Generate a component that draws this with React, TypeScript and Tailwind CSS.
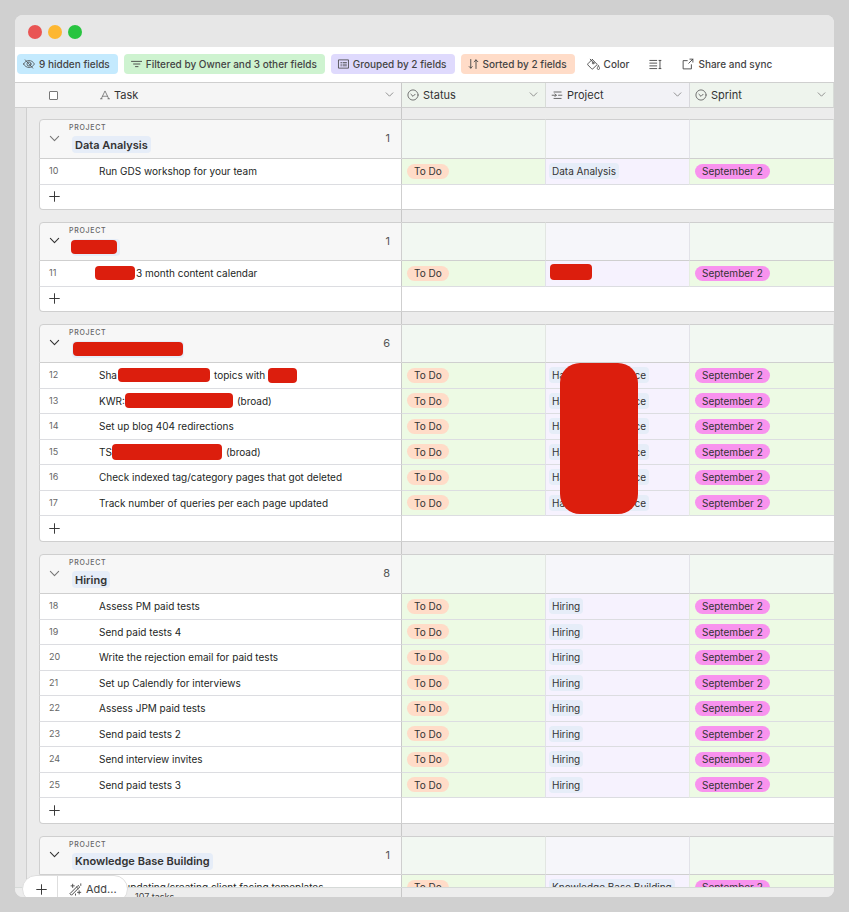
import { type ReactNode } from "react";
import clsx from "clsx";

type Task = { id: number; title: ReactNode; project: ReactNode };
type Group = { name: string; heading: ReactNode; count: number; open?: boolean; tasks: Task[] };

function Redacted({ className }: { className: string }) {
  return <span className={clsx("inline-block shrink-0 bg-[#dc1e0d]", className)} />;
}

function ProjectChip({ children }: { children: ReactNode }) {
  return <span className="flex h-4 w-fit items-center rounded-sm bg-[#e6edf8] px-[3px]">{children}</span>;
}

const simple = (first: number, titles: string[], project: string): Task[] =>
  titles.map((title, i) => ({ id: first + i, title, project: <ProjectChip>{project}</ProjectChip> }));

const partial = (
  <span className="flex h-4 w-[100px] items-center justify-between rounded-sm bg-[#e6edf8] px-[3px]">
    <span>Ha</span>
    <span>ce</span>
  </span>
);

const groups: Group[] = [
  {
    name: "Data Analysis",
    heading: "Data Analysis",
    count: 1,
    tasks: simple(10, ["Run GDS workshop for your team"], "Data Analysis"),
  },
  {
    name: "Redacted",
    heading: <Redacted className="-ml-1 h-[14px] w-[46px] rounded" />,
    count: 1,
    open: true,
    tasks: [
      {
        id: 11,
        title: (
          <>
            <Redacted className="-ml-1 h-[14px] w-10 rounded" />
            <span className="ml-px">3 month content calendar</span>
          </>
        ),
        project: <Redacted className="ml-px block h-4 w-[42px] rounded" />,
      },
    ],
  },
  {
    name: "Redacted",
    heading: <Redacted className="-mx-[2px] h-[14px] w-[110px] rounded" />,
    count: 6,
    open: true,
    tasks: [
      {
        id: 12,
        title: (
          <>
            Sha
            <Redacted className="mr-1 ml-px h-[14px] w-[92px] rounded" />
            topics with
            <Redacted className="ml-[3px] h-[15px] w-[29px] rounded" />
          </>
        ),
        project: (
          <>
            {partial}
            <span className="absolute top-0 left-[14px] z-10 h-[151px] w-[78px] rounded-[20px] bg-[#dc1e0d]" />
          </>
        ),
      },
      {
        id: 13,
        title: (
          <>
            KWR:
            <Redacted className="mr-1 h-[15px] w-[108px] rounded" />
            (broad)
          </>
        ),
        project: partial,
      },
      { id: 14, title: "Set up blog 404 redirections", project: partial },
      {
        id: 15,
        title: (
          <>
            TS
            <Redacted className="mr-1 h-4 w-[110px] rounded" />
            (broad)
          </>
        ),
        project: partial,
      },
      { id: 16, title: "Check indexed tag/category pages that got deleted", project: partial },
      { id: 17, title: "Track number of queries per each page updated", project: partial },
    ],
  },
  {
    name: "Hiring",
    heading: "Hiring",
    count: 8,
    tasks: simple(
      18,
      [
        "Assess PM paid tests",
        "Send paid tests 4",
        "Write the rejection email for paid tests",
        "Set up Calendly for interviews",
        "Assess JPM paid tests",
        "Send paid tests 2",
        "Send interview invites",
        "Send paid tests 3",
      ],
      "Hiring",
    ),
  },
  {
    name: "Knowledge Base Building",
    heading: "Knowledge Base Building",
    count: 1,
    open: true,
    tasks: simple(26, ["Start updating/creating client facing temeplates"], "Knowledge Base Building"),
  },
];

/* ---------- icons ---------- */

function Icon({ children, className }: { children: ReactNode; className: string }) {
  return (
    <svg
      viewBox="0 0 16 16"
      fill="none"
      stroke="currentColor"
      strokeLinecap="round"
      strokeLinejoin="round"
      className={clsx("shrink-0", className)}
      aria-hidden="true"
    >
      {children}
    </svg>
  );
}

const HiddenIcon = () => (
  <Icon className="size-3">
    <path d="M.8 8C2.6 4.8 5.2 3.4 8 3.4S13.4 4.8 15.2 8c-1.8 3.2-4.400 4.600-7.200 4.600S2.600 11.200.8 8Z" />
    <circle cx="8" cy="8" r="2.700" />
    <path d="M3 2.500l10 11" />
  </Icon>
);

const FilterIcon = () => (
  <Icon className="size-3">
    <path d="M2 4.500h14M4.800 8h8.400M7.300 11.500h3.400" strokeWidth="1.200" />
  </Icon>
);

const GroupIcon = () => (
  <Icon className="size-3">
    <path d="M2.500 2.500h12.800v11H2.500Z" strokeWidth="1.100" />
    <path d="M5.200 6h.800M8 6h4.600M5.200 8.200h.800M8 8.200h4.600M5.200 10.400h.800M8 10.400h4.600" />
  </Icon>
);

const SortIcon = () => (
  <Icon className="size-3">
    <path d="M5 2v11.500M3 11.500l2 2 2-2M12 14V2.500M9.500 5 12 2.500 14.500 5" strokeWidth="1.200" />
  </Icon>
);

const ColorIcon = () => (
  <Icon className="size-[13px]">
    <path d="M4 1.500 7.300 5.200M7 2.200 12.600 8 7.300 13.200a1.200 1.200 0 0 1-1.700 0L1.200 8.700a1.200 1.200 0 0 1 0-1.700L6 2.200a.700.700 0 0 1 1 0Z" strokeWidth="1.100" />
    <circle cx="7.600" cy="6.200" r="1.100" />
    <path d="M14 9.600c.9 1.500 1.500 2.300 1.500 3.100a1.400 1.400 0 0 1-2.900 0c0-.8.500-1.600 1.400-3.100Z" />
  </Icon>
);

const RowHeightIcon = () => (
  <Icon className="size-[13px]">
    <path d="M1 3h8.500M1 6.300h8.500M1 9.700h8.500M1 13h8.500M13.500 3v10M12.300 3h2.400M12.300 13h2.400" strokeWidth="1.100" />
  </Icon>
);

const ShareIcon = () => (
  <Icon className="size-3">
    <path d="M7 3.500H1.500v11h11V9M10.500 1.500h4V5.500M14.500 1.500 9 7" strokeWidth="1.200" />
  </Icon>
);

const TextIcon = () => (
  <Icon className="size-[10px]">
    <path d="M2 14 8 1.500 14 14M4.200 10h7.600M.8 14h2.600M12.600 14h2.600" strokeWidth="1.200" />
  </Icon>
);

const SelectIcon = () => (
  <Icon className="size-3">
    <circle cx="8" cy="8" r="6.800" strokeWidth="1.200" />
    <path d="m5.200 7 2.800 2.800L10.800 7" strokeWidth="1.300" />
  </Icon>
);

const LookupIcon = () => (
  <Icon className="size-3">
    <path d="M4 4h9.500M1.500 8.300H7M5.300 6.500l1.800 1.800-1.800 1.800M10 8.300h4.500M4 12.600h9.500" strokeWidth="1.300" />
  </Icon>
);

const Chevron = ({ className }: { className: string }) => (
  <Icon className={className}>
    <path d="m2 5 6 6 6-6" strokeWidth="1.600" />
  </Icon>
);

const Plus = () => (
  <Icon className="size-[11px]">
    <path d="M8 1v14M1 8h14" strokeWidth="1.400" />
  </Icon>
);

const WandIcon = () => (
  <Icon className="size-[13px]">
    <path d="M1.500 12.800 11.300 3l1.900 1.900-9.800 9.800ZM9.300 5l1.900 1.900" strokeWidth="1.200" />
    <path d="M4.500 1.500v4M2.500 3.500h4M12.500 9.500v4M10.500 11.500h4M14.500 1v2M8 13.500v1.500" strokeWidth="1.100" />
  </Icon>
);

/* ---------- layout ---------- */

function ToolbarButton({
  icon,
  label,
  className,
  children,
}: {
  icon: ReactNode;
  label?: string;
  className?: string;
  children?: ReactNode;
}) {
  return (
    <button
      type="button"
      aria-label={label}
      className={clsx("flex h-5 shrink-0 items-center gap-1 rounded-sm pr-2 pl-[6px]", className)}
    >
      {icon}
      {children && <span>{children}</span>}
    </button>
  );
}

function ColumnHead({ icon, name, className }: { icon: ReactNode; name: string; className: string }) {
  return (
    <th scope="col" className={clsx("border-r border-b border-b-[#cfcfcf] pr-[7px] pb-px font-normal", className)}>
      <div className="flex items-center gap-1 text-[11px] text-[#333]">
        <span className="text-[#666]">{icon}</span>
        <span>{name}</span>
        <button type="button" aria-label={`${name} menu`} className="ml-auto text-[#888]">
          <Chevron className="size-[9px]" />
        </button>
      </div>
    </th>
  );
}

// The two strips left of every card
function Gutter() {
  return (
    <>
      <td className="border-r border-[#cfcfcf] bg-[#e6e6e6]" />
      <td />
    </>
  );
}

function GroupRows({ group, tall }: { group: Group; tall: boolean }) {
  return (
    <tbody>
      <tr className={tall ? "h-[40px]" : "h-[39px]"}>
        <Gutter />
        <td colSpan={2} className="rounded-tl border border-[#cfcfcf] bg-[#f7f7f7] pr-[11px] pb-[2px] pl-[9px]">
          <div className="flex items-center">
            <button
              type="button"
              aria-label={`Collapse ${group.name}`}
              className={group.open ? "text-[#333]" : "text-[#777]"}
            >
              <Chevron className="size-[11px]" />
            </button>
            <div className="ml-[9px]">
              <div className="text-[7px] leading-[9px] font-medium tracking-widest text-[#666]">PROJECT</div>
              <div className="mt-1 ml-[3px] flex h-[17px] w-fit items-center rounded-sm bg-[#e6edf8] px-[3px] text-[11px] font-semibold text-[#333]">
                {group.heading}
              </div>
            </div>
            <span className="ml-auto text-[11px] text-[#555]">{group.count}</span>
          </div>
        </td>
        <td className="border-y border-r border-y-[#cfcfcf] border-r-[#e2e6e2] bg-[#f2f8f2]" />
        <td className="border-y border-r border-y-[#cfcfcf] border-r-[#e2e2e8] bg-[#f6f6fa]" />
        <td className="border-y border-r border-y-[#cfcfcf] border-r-[#e2e6e2] bg-[#f2f8f2]" />
      </tr>
      {group.tasks.map((task) => (
        <tr key={task.id} className="h-[25px] even:h-[26px]">
          <Gutter />
          <td className="border-b border-l border-b-[#dcdde1] border-l-[#cfcfcf] bg-white pb-px pl-[9px] text-[9px] text-[#666]">
            {task.id}
          </td>
          <td className="border-r border-b border-r-[#c8c8c8] border-b-[#dcdde1] bg-white pb-px text-[#1d1f25]">
            <div className="flex items-center whitespace-nowrap">{task.title}</div>
          </td>
          <td className="border-r border-b border-r-[#e2e2ea] border-b-[#dcdde1] bg-[#edfae4] pb-px pl-[5px]">
            <span className="flex h-[15px] w-fit items-center rounded-full bg-[#ffdcc8] px-[7px]">To Do</span>
          </td>
          <td className="relative border-r border-b border-r-[#e5eee0] border-b-[#dcdde1] bg-[#f6f2fe] pb-px pl-[3px]">
            {task.project}
          </td>
          <td className="border-b border-[#dcdde1] bg-[#edfae4] pb-px pl-[5px]">
            <span className="flex h-[15px] w-fit items-center rounded-full bg-[#f893ee] px-[7px]">September 2</span>
          </td>
        </tr>
      ))}
      <tr className="h-[25px] even:h-[26px]">
        <Gutter />
        <td colSpan={2} className="rounded-bl border-r border-b border-l border-[#cfcfcf] bg-white pb-px pl-[9px]">
          <button type="button" aria-label={`Add task to ${group.name}`} className="flex text-[#333]">
            <Plus />
          </button>
        </td>
        <td colSpan={3} className="border-b border-[#cfcfcf] bg-white" />
      </tr>
      <tr className="h-3">
        <Gutter />
        <td colSpan={2} className="border-r border-[#c8c8c8]" />
        <td colSpan={3} />
      </tr>
    </tbody>
  );
}

export default function App() {
  return (
    <div className="h-screen bg-[#d0d0d0] p-[15px] font-['Inter',sans-serif] text-[10px] leading-[14px] text-[#333]">
      <div className="relative flex h-full flex-col overflow-hidden rounded-lg bg-[#ececec]">
        <div className="flex h-8 shrink-0 items-center gap-[6px] bg-[#e7e7e7] pt-[2px] pl-[13px]">
          <span className="size-[14px] rounded-full bg-[#e95554]" />
          <span className="size-[14px] rounded-full bg-[#fdb731]" />
          <span className="size-[14px] rounded-full bg-[#28c440]" />
        </div>

        <div className="flex h-9 shrink-0 items-center gap-[6px] border-b border-[#cfcfcf] bg-white px-[2px] pb-px font-medium whitespace-nowrap text-[#444]">
          <ToolbarButton icon={<HiddenIcon />} className="bg-[#c4eafe]">9 hidden fields</ToolbarButton>
          <ToolbarButton icon={<FilterIcon />} className="bg-[#cef3d0]">Filtered by Owner and 3 other fields</ToolbarButton>
          <ToolbarButton icon={<GroupIcon />} className="bg-[#dfdafd]">Grouped by 2 fields</ToolbarButton>
          <ToolbarButton icon={<SortIcon />} className="bg-[#ffdcc8]">Sorted by 2 fields</ToolbarButton>
          <ToolbarButton icon={<ColorIcon />}>Color</ToolbarButton>
          <ToolbarButton icon={<RowHeightIcon />} label="Row height" />
          <ToolbarButton icon={<ShareIcon />}>Share and sync</ToolbarButton>
        </div>

        <div className="min-h-0 flex-1 overflow-y-auto [scrollbar-width:none]">
          <table className="w-full table-fixed border-separate border-spacing-0 text-left">
            <colgroup>
              <col className="w-3" />
              <col className="w-3" />
              <col className="w-[60px]" />
              <col />
              <col className="w-36" />
              <col className="w-36" />
              <col className="w-36" />
            </colgroup>
            <thead className="sticky top-0 z-20">
              <tr className="h-[25px]">
                <th colSpan={3} className="border-b border-[#cfcfcf] bg-[#f5f5f5] pl-[34px]">
                  <input
                    type="checkbox"
                    aria-label="Select all tasks"
                    className="block size-[9px] appearance-none rounded-[1px] border border-[#777] bg-white"
                  />
                </th>
                <ColumnHead icon={<TextIcon />} name="Task" className="border-r-[#c8c8c8] bg-[#f5f5f5] pl-px" />
                <ColumnHead icon={<SelectIcon />} name="Status" className="border-r-[#d8dcd8] bg-[#eef4ed] pl-[5px]" />
                <ColumnHead icon={<LookupIcon />} name="Project" className="border-r-[#d8d8dc] bg-[#f2f2f6] pl-[5px]" />
                <ColumnHead icon={<SelectIcon />} name="Sprint" className="border-r-[#d8dcd8] bg-[#eef4ed] pl-[5px]" />
              </tr>
            </thead>
            <tbody>
              <tr className="h-[11px]">
                <Gutter />
                <td colSpan={2} className="border-r border-[#c8c8c8]" />
                <td colSpan={3} />
              </tr>
            </tbody>
            {groups.map((group, i) => (
              <GroupRows key={i} group={group} tall={i % 3 === 0} />
            ))}
          </table>
        </div>

        <div className="flex h-[10px] shrink-0 overflow-hidden border-t border-[#d6dad8] bg-[#ededed] text-[9px] text-[#444]">
          <div className="flex-1 border-r border-[#c8c8c8] pt-[3px] pl-[120px] leading-[12px]">107 tasks</div>
          <div className="w-[432px]" />
        </div>

        <div className="absolute -bottom-[6px] left-[7px] z-30 flex h-7 items-center overflow-hidden rounded-full border border-[#dedede] bg-white text-[#333]">
          <button
            type="button"
            aria-label="Add record"
            className="flex h-full w-[35px] items-center justify-center border-r border-[#dedede] pl-[2px]"
          >
            <Plus />
          </button>
          <button type="button" className="flex h-full items-center gap-1 pr-[10px] pl-[11px] text-[11px] text-[#444]">
            <WandIcon />
            <span>Add...</span>
          </button>
        </div>
      </div>
    </div>
  );
}
